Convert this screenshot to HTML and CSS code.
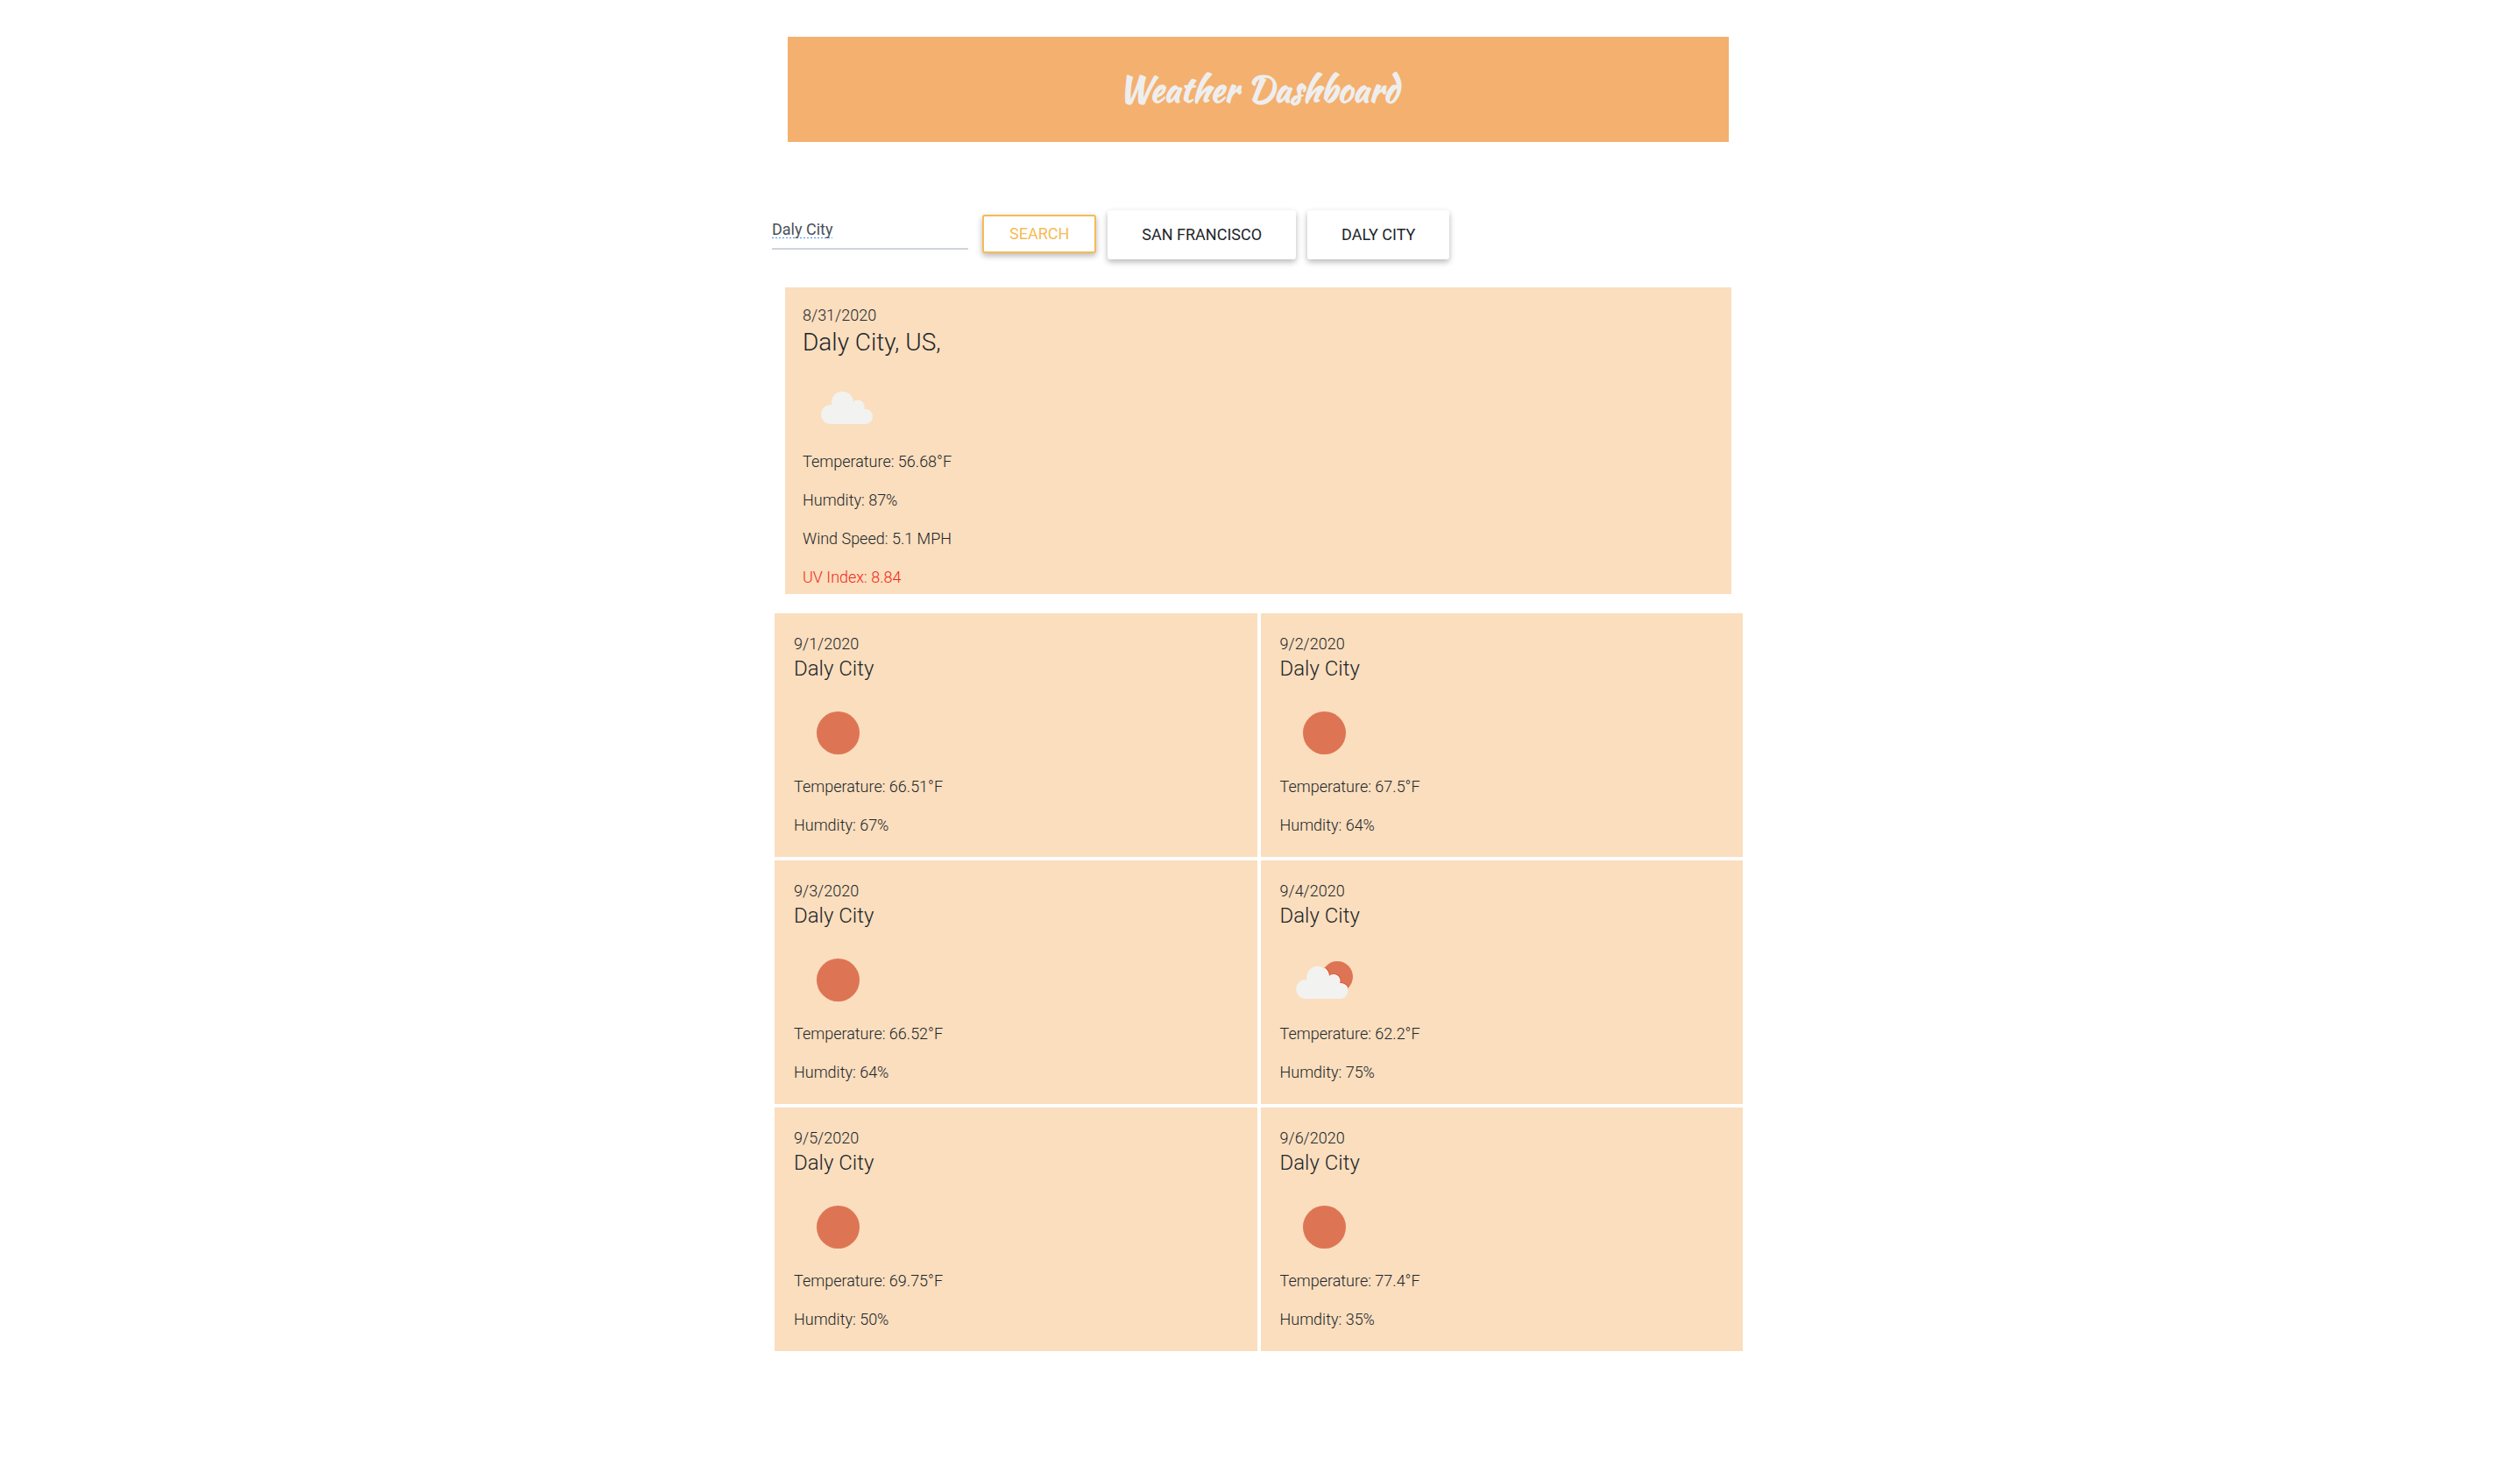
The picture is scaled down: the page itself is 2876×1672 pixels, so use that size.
FILE: index.html
```html
<!DOCTYPE html>
<html lang="en">
<head>
<meta charset="utf-8">
<meta name="viewport" content="width=device-width, initial-scale=1">
<title>Weather Dashboard</title>
<link rel="stylesheet" href="styles.css">
</head>
<body>
<svg width="0" height="0" class="sprite" aria-hidden="true">
  <symbol id="cloud" viewBox="0 0 100 96">
    <circle cx="33" cy="58" r="11"/><circle cx="46.5" cy="44.3" r="12.5"/><circle cx="64" cy="49.2" r="7.6"/><circle cx="72.3" cy="60.3" r="8.7"/>
    <path d="M33 69V52L46 44L58 46L64 49L72.3 55V69Z"/>
  </symbol>
  <clipPath id="sun-disc"><circle cx="66.3" cy="46.7" r="17.7"/></clipPath>
</svg>
<div class="container">
  <header class="banner"><h1>Weather Dashboard</h1></header>
  <form class="search">
    <input class="city-input" type="text" value="Daly City" aria-label="City">
    <button class="btn btn-search" type="button">SEARCH</button>
    <button class="btn btn-city" type="button">SAN FRANCISCO</button>
    <button class="btn btn-city" type="button">DALY CITY</button>
  </form>
  <main>
    <section class="today">
      <p class="date">8/31/2020</p>
      <h2>Daly City, US,</h2>
      <svg class="icon" viewBox="0 0 100 96"><use href="#cloud" class="cloud"/></svg>
      <p>Temperature: 56.68°F</p>
      <p>Humdity: 87%</p>
      <p>Wind Speed: 5.1 MPH</p>
      <p class="uv">UV Index: 8.84</p>
    </section>
    <div class="forecast">
      <section class="day">
        <p class="date">9/1/2020</p>
        <h3>Daly City</h3>
        <svg class="icon" viewBox="0 0 100 96"><circle class="sun" cx="51.5" cy="50.5" r="24.5"/></svg>
        <p>Temperature: 66.51°F</p>
        <p>Humdity: 67%</p>
      </section>
      <section class="day">
        <p class="date">9/2/2020</p>
        <h3>Daly City</h3>
        <svg class="icon" viewBox="0 0 100 96"><circle class="sun" cx="51.5" cy="50.5" r="24.5"/></svg>
        <p>Temperature: 67.5°F</p>
        <p>Humdity: 64%</p>
      </section>
      <section class="day">
        <p class="date">9/3/2020</p>
        <h3>Daly City</h3>
        <svg class="icon" viewBox="0 0 100 96"><circle class="sun" cx="51.5" cy="50.5" r="24.5"/></svg>
        <p>Temperature: 66.52°F</p>
        <p>Humdity: 64%</p>
      </section>
      <section class="day">
        <p class="date">9/4/2020</p>
        <h3>Daly City</h3>
        <svg class="icon" viewBox="0 0 100 96">
          <circle class="sun" cx="66.3" cy="46.7" r="17.7"/>
          <g clip-path="url(#sun-disc)">
            <use href="#cloud" x="-1" y="1.6" width="100" height="96" class="rim"/>
            <use href="#cloud" x="-2" y="2.4" width="100" height="96" class="glow"/>
          </g>
          <use href="#cloud" x="-2.8" y="3" width="100" height="96" class="cloud"/>
        </svg>
        <p>Temperature: 62.2°F</p>
        <p>Humdity: 75%</p>
      </section>
      <section class="day">
        <p class="date">9/5/2020</p>
        <h3>Daly City</h3>
        <svg class="icon" viewBox="0 0 100 96"><circle class="sun" cx="51.5" cy="50.5" r="24.5"/></svg>
        <p>Temperature: 69.75°F</p>
        <p>Humdity: 50%</p>
      </section>
      <section class="day">
        <p class="date">9/6/2020</p>
        <h3>Daly City</h3>
        <svg class="icon" viewBox="0 0 100 96"><circle class="sun" cx="51.5" cy="50.5" r="24.5"/></svg>
        <p>Temperature: 77.4°F</p>
        <p>Humdity: 35%</p>
      </section>
    </div>
  </main>
</div>
</body>
</html>
```
FILE: styles.css
```css
* { box-sizing: border-box; }
body {
  margin: 0;
  padding: 42px 4px 0 0;
  background: #fff;
  color: #212529;
  font: 300 18px/27px Roboto, sans-serif;
}
.sprite { position: absolute; }
.container { max-width: 1110px; margin: 0 auto; }
.banner {
  display: flex;
  align-items: center;
  justify-content: center;
  min-height: 120px;
  margin: 0 18px;
  background: #f4b06e;
  color: #eee;
}
h1, h2, h3, p { margin: 0; }
h1 { font: 700 40px/48px "Kaushan Script", cursive; }
h2 { font-weight: 300; font-size: 28px; line-height: 35px; }
h3 { font-weight: 300; font-size: 24px; line-height: 31px; }

.search {
  display: flex;
  flex-wrap: wrap;
  align-items: center;
  margin-top: 78px;
}
.city-input {
  width: 224px;
  height: 45px;
  margin: 0 16px 11px 0;
  padding: 0;
  border: 0;
  border-bottom: 2px solid #ced4da;
  outline: 0;
  background: transparent;
  color: #495057;
  font: 400 18px/27px Roboto, sans-serif;
  text-decoration: underline dotted #4a8cf0 2px;
  text-decoration-skip-ink: none;
  text-underline-offset: 3px;
}
.btn {
  margin-right: 13px;
  border: 0;
  border-radius: 3px;
  background: #fff;
  color: #212529;
  font: 400 18px/24px Roboto, sans-serif;
  box-shadow: 0 3px 6px rgba(0, 0, 0, .22), 0 3px 10px rgba(0, 0, 0, .08);
}
.btn-search {
  margin-bottom: 2px;
  padding: 8px 29px;
  border: 2px solid #f6bb55;
  color: #f6bb55;
}
.btn-city { padding: 16px 39px; }

.today {
  margin: 32px 15px 22px;
  padding: 18px 20px 6px;
  background: #fadebe;
}
.forecast {
  display: grid;
  grid-template-columns: 1fr 1fr;
  gap: 4px;
  margin: 0 2px 0 3px;
}
.day { padding: 21px 22px 23px; background: #fadebe; }
.icon {
  display: block;
  width: 100px;
  height: 96px;
  margin: 7px 0 2px -1px;
}
.icon ~ p + p { margin-top: 17px; }
.sun { fill: #dd7555; }
.cloud { fill: #f2f2f0; }
.rim { fill: #e05a38; }
.glow { fill: #fff; }
.uv { color: #f02818; }
```
